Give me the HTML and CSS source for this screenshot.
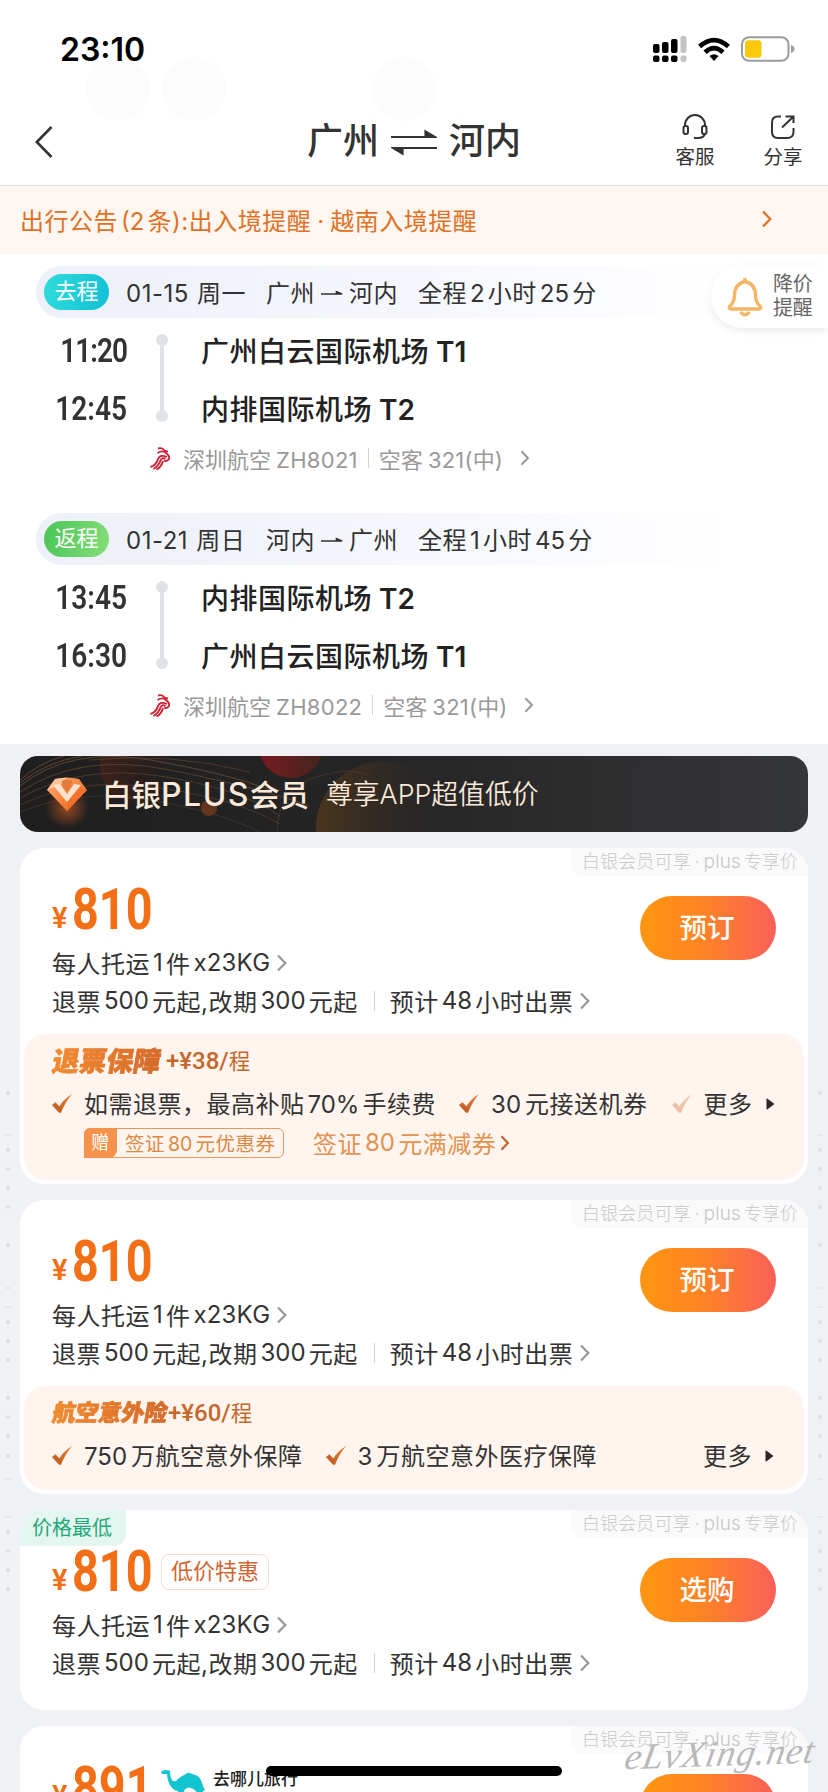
FILE: index.html
```html
<!DOCTYPE html>
<html lang="zh-CN">
<head>
<meta charset="utf-8">
<title>广州 ⇌ 河内</title>
<link rel="stylesheet" href="styles.css">
</head>
<body>
<svg class="defs" width="0" height="0">
  <defs>
    <linearGradient id="tickFill" x1="0" y1="1" x2="1" y2="0"><stop offset="0" stop-color="#b9561e"/><stop offset="1" stop-color="#e8893f"/></linearGradient>
    <symbol id="chev" viewBox="0 0 10 18"><path d="M1 1.500 L8.300 9 L1 16.500" fill="none" stroke="currentColor" stroke-width="2.300"/></symbol>
    <symbol id="tick" viewBox="0 0 20 19"><path d="M0 11 L3.400 8.300 L7.400 12.200 Q12 5 20 0 Q13 8.500 9 18.800 L7 18.800 Z" fill="url(#tickFill)"/></symbol>
    <symbol id="more" viewBox="0 0 8 12"><path d="M.5 1.200 Q.5 0 1.500 .700 L7.600 5.300 Q8.300 6 7.600 6.700 L1.500 11.300 Q.5 12 .5 10.800 Z" fill="#2c2624"/></symbol>
    <symbol id="to" viewBox="0 0 24 10"><path d="M0 6 H22 L16 3.500 V6" fill="#333" stroke="#333" stroke-width="1.400"/></symbol>
    <symbol id="szair" viewBox="0 0 20 23"><g fill="none" stroke="#cc2336" stroke-width="1.900"><path d="M8 1.500 Q12 .5 13.500 2.500 Q15 4.500 18 4.500"/><path d="M7.500 6 Q13 2.500 16.500 6.500 Q20 9 19 12 Q17 15 14 13.500"/><path d="M0.500 20 Q6.500 18 8 12 Q10 7 17 10"/><path d="M3.500 22 Q9 18.500 10.500 13.500 Q12 10 15.500 12"/><path d="M6.500 22.500 Q11.500 20 13 14"/></g></symbol>
    <symbol id="trackL" viewBox="0 0 12 504"><g fill="#dcdee2"><circle cx="6" cy="5" r="2"/><path d="M3 46.500h6v1H3z"/><circle cx="6" cy="62" r="2"/><circle cx="6" cy="81" r="2"/><circle cx="6" cy="100" r="2"/><circle cx="6" cy="119" r="2"/><circle cx="6" cy="157" r="2"/><path d="M3 199.500h6v1H3zM3 218.500h6v1H3z"/><circle cx="6" cy="234" r="2"/><circle cx="6" cy="253" r="2"/><circle cx="6" cy="272" r="2"/><circle cx="6" cy="310" r="2"/><circle cx="6" cy="329" r="2"/><circle cx="6" cy="348" r="2"/><circle cx="6" cy="368" r="2"/><path d="M3 390.500h6v1H3zM3 428.500h6v1H3z"/><circle cx="6" cy="444" r="2"/><circle cx="6" cy="463" r="2"/><circle cx="6" cy="482" r="2"/><circle cx="6" cy="501" r="2"/></g></symbol>
  </defs>
</svg>

<div class="screen">
  <header class="top">
    <span class="ghost g1"></span><span class="ghost g2"></span><span class="ghost g3"></span>
    <div class="status">
      <span class="clock">23:10</span>
      <div class="status-icons">
        <svg class="ic-signal" viewBox="0 0 34 26"><g><rect x="0" y="8" width="6.500" height="9" rx="2"/><rect x="9" y="6" width="6.500" height="11" rx="2"/><rect x="18" y="3" width="6.500" height="14" rx="2"/><rect x="0" y="19.500" width="6.500" height="6.500" rx="2"/><rect x="9" y="19.500" width="6.500" height="6.500" rx="2"/><rect x="18" y="19.500" width="6.500" height="6.500" rx="2"/></g><g fill="#c4c4c4"><rect x="27.500" y="0" width="6" height="17" rx="2"/><rect x="27.500" y="19.500" width="6" height="6.500" rx="2"/></g></svg>
        <svg class="ic-wifi" viewBox="0 0 32 24"><g fill="none" stroke="#000" stroke-width="4.600"><path d="M1.600 9 Q16 -3.800 30.400 9"/><path d="M7 14.700 Q16 6.500 25 14.700"/></g><path d="M11.500 18.600 Q16 15 20.500 18.600 L16 23.500 Z"/></svg>
        <svg class="ic-battery" viewBox="0 0 54 26"><rect x="1" y="1.200" width="46.500" height="23.600" rx="7" fill="#fff" stroke="#9c9c9c" stroke-width="2"/><rect x="4" y="4.200" width="16.500" height="17.600" rx="3.500" fill="#fbc90b"/><path d="M50 9 Q53.500 10.500 53.500 13 Q53.500 15.500 50 17 Z" fill="#9c9c9c"/></svg>
      </div>
    </div>
    <nav class="nav">
      <svg class="ic-back" viewBox="0 0 18 32"><path d="M16.500 1 L1.800 16 L16.500 31" fill="none" stroke="#333" stroke-width="2.600"/></svg>
      <h1 class="title"><span>广州</span><svg class="ic-swap" viewBox="0 0 46 28"><path d="M0 9 H44 L34.500 3.500 V9" fill="#333" stroke="#333" stroke-width="2.200"/><path d="M46 20 H2 L11.500 25.500 V20" fill="#333" stroke="#333" stroke-width="2.200"/></svg><span>河内</span></h1>
      <div class="tools">
        <div class="tool"><svg viewBox="0 0 26 26"><g fill="none" stroke="#333" stroke-width="2"><path d="M3 13 V11 A10 10 0 0 1 23 11 V13"/><rect x="1.500" y="12" width="4.500" height="8" rx="2"/><rect x="20" y="12" width="4.500" height="8" rx="2"/><path d="M23 19.500 Q22 24 16 24 H12"/></g></svg><span>客服</span></div>
        <div class="tool"><svg viewBox="0 0 26 26"><g fill="none" stroke="#333" stroke-width="2"><path d="M11 2.500 H8 Q2 2.500 2 8.500 V18 Q2 24 8 24 H17 Q23.500 24 23.500 18 V14"/><path d="M12 13.500 L23 3 M15.500 2.500 H23.500 V9"/></g></svg><span>分享</span></div>
      </div>
    </nav>
  </header>

  <div class="notice"><span class="notice-text">出行公告<span class="n">(2</span>条):出入境提醒<span class="dot">·</span>越南入境提醒</span><svg class="chev"><use href="#chev"/></svg></div>

  <section class="flights">
    <div class="alert"><svg viewBox="0 0 36 40"><g fill="none" stroke="#f5b765" stroke-width="3.400"><path d="M18 4.500 Q28.500 7 28.500 18 Q28.500 25 33 29 Q35 31.500 32 32 H4 Q1 31.500 3 29 Q7.500 25 7.500 18 Q7.500 7 18 4.500 Z" stroke-linejoin="round"/><path d="M13.500 35 Q18 40.500 22.500 35" /><path d="M18 1 V4"/></g></svg><span>降价<br>提醒</span></div>

    <article class="leg">
      <div class="leg-head"><span class="badge go">去程</span><span class="date">01-15 <span class="day">周一</span></span><span class="route">广州<svg><use href="#to"/></svg>河内</span><span class="dur">全程<span class="n">2</span>小时<span class="n">25</span>分</span></div>
      <div class="leg-body">
        <div class="times"><span class="narrow">11:20</span><span>12:45</span></div>
        <div class="line"></div>
        <div class="ports"><span>广州白云国际机场 <b>T1</b></span><span>内排国际机场 <b>T2</b></span></div>
      </div>
      <div class="carrier"><svg class="logo"><use href="#szair"/></svg><span>深圳航空<span class="fn">ZH8021</span></span><i class="bar"></i><span>空客<span class="ac">321(</span>中)</span><svg class="chev"><use href="#chev"/></svg></div>
    </article>

    <article class="leg">
      <div class="leg-head"><span class="badge back">返程</span><span class="date">01-21 <span class="day">周日</span></span><span class="route">河内<svg><use href="#to"/></svg>广州</span><span class="dur">全程<span class="n">1</span>小时<span class="n">45</span>分</span></div>
      <div class="leg-body">
        <div class="times"><span>13:45</span><span>16:30</span></div>
        <div class="line"></div>
        <div class="ports"><span>内排国际机场 <b>T2</b></span><span>广州白云国际机场 <b>T1</b></span></div>
      </div>
      <div class="carrier"><svg class="logo"><use href="#szair"/></svg><span>深圳航空<span class="fn">ZH8022</span></span><i class="bar"></i><span>空客<span class="ac">321(</span>中)</span><svg class="chev"><use href="#chev"/></svg></div>
    </article>
  </section>

  <main class="offers">
    <svg class="track left"><use href="#trackL"/></svg>
    <svg class="track right"><use href="#trackL"/></svg>

    <div class="plus">
      <svg class="plus-art" viewBox="0 0 788 76">
        <defs>
          <linearGradient id="amber" x1="0" x2="1"><stop offset="0" stop-color="#4a351c"/><stop offset="1" stop-color="#2a2725" stop-opacity="0"/></linearGradient>
          <linearGradient id="rust" x1="0" x2="1"><stop offset="0" stop-color="#3d2119"/><stop offset="1" stop-color="#2a1d19" stop-opacity="0"/></linearGradient>
          <linearGradient id="ruby" x1="0" x2="1"><stop offset="0" stop-color="#771c20"/><stop offset="1" stop-color="#42241c"/></linearGradient>
          <linearGradient id="gem" x1="0" y1="0" x2="1" y2="1"><stop offset="0" stop-color="#ffb27c"/><stop offset=".5" stop-color="#f8863f"/><stop offset="1" stop-color="#e45b1d"/></linearGradient>
          <radialGradient id="glow"><stop offset="0" stop-color="#b25420" stop-opacity=".8"/><stop offset="1" stop-color="#b25420" stop-opacity="0"/></radialGradient>
        </defs>
        <circle cx="118" cy="10" r="38" fill="url(#rust)"/>
        <circle cx="271" cy="-10" r="32" fill="url(#ruby)"/>
        <circle cx="362" cy="72" r="66" fill="url(#amber)"/>
        <circle cx="189" cy="52" r="8" fill="#62351c"/>
        <g fill="none" stroke="#5e4630" stroke-width="1">
          <path d="M0 24 Q20 6 44 0"/><path d="M0 27 Q26 6 62 0"/><path d="M0 30 Q50 -10 130 4 T250 34"/><path d="M0 36 Q60 -4 150 14 T290 50" opacity=".8"/><path d="M0 42 Q60 8 140 20 T260 60" opacity=".7"/><path d="M0 49 Q60 20 140 32 T260 68" opacity=".6"/><path d="M0 56 Q60 32 130 44 T240 76" opacity=".5"/><path d="M70 4 Q150 -4 230 16" opacity=".7"/><path d="M257 76 Q258 30 300 20 Q330 10 350 20" opacity=".5"/>
        </g>
        <ellipse cx="47" cy="52" rx="22" ry="20" fill="url(#glow)"/>
        <path d="M35 23 Q47 20 59 23 L67 34 L47 55 L27 34 Z" fill="url(#gem)"/>
        <path d="M35 23 L47 21.500 L40 29 L27 34 Z" fill="#ffd2ae" opacity=".7"/>
        <path d="M67 34 L47 55 V46 L60 31 Z" fill="#f0702c" opacity=".75"/>
        <path d="M42 25 Q47 22 52 25 L51 31 L47 36 L43 31 Z" fill="#e47a3c"/>
        <path d="M33 29 L40 28 L47 38 L54 28 L61 29 L47 46 Z" fill="#ffe3cb"/>
      </svg>
      <strong class="plus-name">白银<span>PLUS</span>会员</strong><span class="plus-desc">尊享<span>APP</span>超值低价</span>
    </div>

    <article class="card">
      <span class="perk">白银会员可享<span class="dot">·</span><span class="en">plus</span>专享价</span>
      <div class="card-body">
        <div class="info">
          <div class="price"><small>¥</small><b>810</b></div>
          <div class="row">每人托运<span class="n">1</span>件<span class="n kg">x23KG</span><svg class="chev"><use href="#chev"/></svg></div>
          <div class="row">退票<span class="n">500</span>元起,改期<span class="n">300</span>元起<i class="bar"></i>预计<span class="n">48</span>小时出票<svg class="chev"><use href="#chev"/></svg></div>
        </div>
        <button class="buy">预订</button>
      </div>
      <div class="promo">
        <div class="promo-title"><em class="w4">退票保障</em><span class="add">+¥38/<span>程</span></span></div>
        <div class="benefits"><svg class="tick"><use href="#tick"/></svg><span>如需退票，最高补贴<span class="n">70%</span>手续费</span><svg class="tick gap1"><use href="#tick"/></svg><span><span class="n first">30</span>元接送机券</span><svg class="tick faded"><use href="#tick"/></svg><span class="more">更多<svg><use href="#more"/></svg></span></div>
        <div class="coupons"><span class="coupon"><i>赠</i><span>签证<span class="n">80</span>元优惠券</span></span><span class="visa">签证<span class="n">80</span>元满减券<svg class="chev"><use href="#chev"/></svg></span></div>
      </div>
    </article>

    <article class="card">
      <span class="perk">白银会员可享<span class="dot">·</span><span class="en">plus</span>专享价</span>
      <div class="card-body">
        <div class="info">
          <div class="price"><small>¥</small><b>810</b></div>
          <div class="row">每人托运<span class="n">1</span>件<span class="n kg">x23KG</span><svg class="chev"><use href="#chev"/></svg></div>
          <div class="row">退票<span class="n">500</span>元起,改期<span class="n">300</span>元起<i class="bar"></i>预计<span class="n">48</span>小时出票<svg class="chev"><use href="#chev"/></svg></div>
        </div>
        <button class="buy">预订</button>
      </div>
      <div class="promo short">
        <div class="promo-title"><em class="w5">航空意外险</em><span class="add">+¥60/<span>程</span></span></div>
        <div class="benefits"><svg class="tick"><use href="#tick"/></svg><span><span class="n first">750</span>万航空意外保障</span><svg class="tick gap1"><use href="#tick"/></svg><span><span class="n first">3</span>万航空意外医疗保障</span><span class="more">更多<svg><use href="#more"/></svg></span></div>
      </div>
    </article>

    <article class="card plain">
      <span class="lowest">价格最低</span>
      <span class="perk">白银会员可享<span class="dot">·</span><span class="en">plus</span>专享价</span>
      <div class="card-body">
        <div class="info">
          <div class="price"><small>¥</small><b>810</b><span class="deal">低价特惠</span></div>
          <div class="row">每人托运<span class="n">1</span>件<span class="n kg">x23KG</span><svg class="chev"><use href="#chev"/></svg></div>
          <div class="row">退票<span class="n">500</span>元起,改期<span class="n">300</span>元起<i class="bar"></i>预计<span class="n">48</span>小时出票<svg class="chev"><use href="#chev"/></svg></div>
        </div>
        <button class="buy">选购</button>
      </div>
    </article>

    <article class="card">
      <span class="perk">白银会员可享<span class="dot">·</span><span class="en">plus</span>专享价</span>
      <div class="card-body">
        <div class="info">
          <div class="price"><small>¥</small><b>891</b><span class="brand"><svg viewBox="0 0 44 36"><path d="M0 1.500 L4 0 L9 .5 Q9 7 11 10 Q14 13 17 9 Q20 6 24 4.500 Q27 1.500 30 3.500 L34 5 Q39 6 41 13 Q42 17 44 20 L42 21 L41.500 36 H36 L35 21 Q32 18 28 17.500 Q24 18 23 21 L22 36 H18 L17 21 Q11 20 8 13 Q6 8 6 4 L1 4 Z" fill="#12c3d0"/></svg>去哪儿旅行</span></div>
        </div>
        <button class="buy" aria-label="选购"></button>
      </div>
    </article>
  </main>

  <div class="home-bar"></div>
  <div class="watermark">eLvXing.net</div>
</div>
</body>
</html>
```
FILE: styles.css
```css
* { box-sizing: border-box; }
body { margin: 0; background: #eff1f5; font-family: Inter, "Noto Sans CJK SC", sans-serif; color: #333; font-size: 24px; letter-spacing: .5px; }
svg { display: block; flex: none; }
.defs { position: absolute; }
.screen { position: relative; width: 828px; height: 1792px; overflow: hidden; white-space: nowrap; }
.n { margin: 0 3.200px 0 3px; letter-spacing: 0; }
.n.first { margin-left: 0; margin-right: 4px; }
.dot { display: inline-block; width: 19px; text-align: center; letter-spacing: 0; }
.chev { width: 10px; height: 18px; color: #999; }

/* header */
.top { position: relative; height: 186px; background: #fff; border-bottom: 1px solid #dcdcdc; }
.ghost { position: absolute; top: 57px; width: 64px; height: 64px; border-radius: 50%; background: #fcfcfc; }
.g1 { left: 86px; } .g2 { left: 162px; } .g3 { left: 372px; }
.status { position: relative; height: 98px; padding: 0 34px 0 60px; display: flex; align-items: center; justify-content: space-between; }
.clock { font-weight: 600; font-size: 32px; color: #000; letter-spacing: 0; }
.status-icons { display: flex; align-items: center; gap: 11px; margin-right: -1px; }
.ic-signal { width: 34px; height: 26px; }
.ic-wifi { width: 32px; height: 25px; }
.ic-battery { width: 54px; height: 26px; }
.nav { position: relative; height: 87px; display: grid; grid-template-columns: 200px 1fr 200px; align-items: center; }
.ic-back { width: 18px; height: 32px; margin-left: 35px; }
.title { margin: 0; display: flex; align-items: center; justify-content: center; gap: 12px; font-size: 36px; font-weight: 500; letter-spacing: 0; }
.title span { padding-bottom: 7px; }
.ic-swap { width: 46px; height: 28px; }
.tools { display: flex; justify-content: flex-end; gap: 48px; padding-right: 25px; }
.tool { width: 40px; display: flex; flex-direction: column; align-items: center; gap: 5px; font-size: 19.5px; line-height: 24px; letter-spacing: 0; }
.tool svg { width: 26px; height: 26px; }

.notice { height: 68px; padding: 0 56px 2px 20px; background: #fef6f0; color: #de7226; display: flex; align-items: center; justify-content: space-between; font-size: 24px; }
.notice .chev { color: #de7226; }

/* itinerary */
.flights { position: relative; height: 490px; padding: 12px 0 0 36px; background: #fff; display: flex; flex-direction: column; }
.alert { position: absolute; right: 0; top: 11px; width: 117px; height: 63px; padding-left: 16px; border-radius: 32px 0 0 32px; background: #fff; box-shadow: 0 3px 8px rgba(0,0,0,.08); display: flex; align-items: center; gap: 10px; font-size: 20px; line-height: 24px; color: #666; letter-spacing: -.3px; }
.alert svg { width: 36px; height: 40px; }
.alert span { padding-bottom: 1px; }
.leg { flex: none; height: 247px; }
.leg-head { height: 52px; width: 700px; padding: 0 0 2px 8px; border-radius: 26px 0 0 26px; background: linear-gradient(90deg, #eef0f9, #f6f8fd 60%, #fff); display: flex; align-items: center; font-size: 24px; }
.badge { width: 65px; height: 36px; border-radius: 18px; color: #fff; font-size: 22px; line-height: 34px; text-align: center; letter-spacing: 0; margin: 2px 17px 0 0; }
.go { background: linear-gradient(100deg, #31dcdc, #10c0d6); }
.back { background: linear-gradient(100deg, #4bc556, #85de79); }
.date { width: 140px; } .day { margin-left: 1px; }
.route { display: flex; align-items: center; gap: 5.500px; width: 152px; }
.route svg { width: 23px; height: 10px; margin-top: 3px; }
.leg-body { height: 119px; display: grid; grid-template-columns: 91px 12px 1fr; column-gap: 29px; padding-top: 3px; }
.times, .ports { display: flex; flex-direction: column; }
.times span, .ports span { height: 58px; line-height: 58px; }
.times { align-items: flex-end; }
.times span { font-family: Roboto, sans-serif; font-weight: 600; font-size: 34px; letter-spacing: 0; transform: scaleX(.825); transform-origin: right; }
.times .narrow { letter-spacing: -1.2px; }
.line { margin: 13px 4px 0; height: 88px; width: 4px; position: relative; background: linear-gradient(#e0e3e5, #e0e3e5) 0 50% / 4px 76px no-repeat; }
.line::before, .line::after { content: ""; position: absolute; left: -4px; width: 12px; height: 12px; border-radius: 50%; background: #e0e3e5; }
.line::before { top: 0; } .line::after { bottom: 0; }
.ports { padding: 2px 0 0 4px; color: #222; font-weight: 500; font-size: 28px; }
.ports b { font-weight: 600; margin-left: -1px; letter-spacing: 0; }
.carrier { height: 42px; padding-left: 114px; display: flex; align-items: center; color: #999; font-size: 22px; letter-spacing: 0; }
.carrier > span { padding-bottom: 1px; }
.logo { width: 20px; height: 23px; margin-right: 13px; }
.carrier .bar { height: 20px; margin: 0 10px; }
.fn { margin-left: 5px; letter-spacing: .3px; }
.ac { margin-left: 5px; letter-spacing: .2px; }
.carrier .chev { margin-left: 17px; height: 16px; }
.bar { width: 1px; height: 20px; background: #d4d4d4; }

/* offers */
.offers { position: relative; padding: 12px 20px 0; display: flex; flex-direction: column; gap: 16px; }
.track { position: absolute; top: 344px; width: 12px; height: 504px; }
.track.left { left: 2px; } .track.right { right: 2px; }
.plus { position: relative; height: 76px; border-radius: 18px; overflow: hidden; background: linear-gradient(90deg, #1f1e1f, #272728 55%, #353638); padding: 0 0 3px 82px; display: flex; align-items: center; color: #fbe9d9; }
.plus-art { position: absolute; inset: 0; width: 788px; height: 76px; }
.plus-name { position: relative; font-weight: 500; font-size: 29.500px; letter-spacing: 0; }
.plus-name span { letter-spacing: 1.500px; font-size: 32px; }
.plus-desc { position: relative; margin-left: 17px; font-size: 26.800px; font-weight: 350; letter-spacing: 0; }

.card { position: relative; border-radius: 24px; overflow: hidden; background: #fff; flex: none; padding-bottom: 4px; }
.plain { padding-bottom: 28px; }
.perk { position: absolute; right: 0; top: 0; width: 237px; height: 28px; padding-left: 11px; border-bottom-left-radius: 12px; background: #fafafa; color: #c8c8c8; font-size: 18px; line-height: 27px; font-weight: 300; letter-spacing: .1px; }
.perk .dot { width: 13px; }
.en { margin-right: 3px; font-size: 19px; }
.card-body { display: flex; justify-content: space-between; padding: 0 32px; height: 172px; }
.price { height: 96px; padding-top: 41px; display: flex; align-items: flex-start; font-family: Roboto, "Noto Sans CJK SC", sans-serif; color: #f26f16; line-height: 41px; letter-spacing: 0; }
.price small { font-size: 29px; font-weight: 600; width: 20px; padding-top: 9px; }
.price b { font-size: 57px; font-weight: 700; width: 77px; transform: scaleX(.82); transform-origin: left; }
.row { height: 38px; padding-bottom: 2px; display: flex; align-items: center; color: #333; }
.row .bar { margin: 2px 15px 0 16px; }
.row .chev { margin: 2px 0 0 7px; }
.kg { margin-right: 0; letter-spacing: .2px; }
.buy { flex: none; width: 136px; height: 64px; margin-top: 48px; padding: 0 2px 0 0; border: 0; border-radius: 32px; background: linear-gradient(90deg, #ff9610, #fe8423 45%, #f9605a); color: #fff; font: 500 27.500px/62px Inter, "Noto Sans CJK SC", sans-serif; }
.promo { margin: 14px 4px 0; height: 146px; padding: 5px 28px 0 29px; border-radius: 22px; background: #fff5ee; }
.promo.short { height: 104px; }
.promo-title { height: 42px; padding-bottom: 2px; display: flex; align-items: center; letter-spacing: 0; }
.promo-title em { font-style: normal; font-weight: 900; transform: skewX(-10deg); background: linear-gradient(90deg, #f28a30, #d4692a); -webkit-background-clip: text; background-clip: text; color: transparent; -webkit-text-stroke: .8px transparent; }
.w4 { font-size: 27px; width: 113px; } .w5 { font-size: 23px; width: 115px; }
.add { font: 500 24px Roboto, "Noto Sans CJK SC", sans-serif; color: #c4682c; }
.add span { font-weight: 400; font-size: 21.500px; }
.benefits { height: 46px; padding-bottom: 3px; display: flex; align-items: center; }
.tick { width: 20px; height: 19px; margin: 2px 12px 0 -1px; }
.gap1 { margin-left: 23px; }
.faded { margin-left: 24px; opacity: .35; }
.more { margin-left: auto; display: flex; align-items: center; gap: 13px; padding-right: 3px; }
.more svg { width: 8px; height: 12px; margin-top: 2px; }
.coupons { display: flex; align-items: center; padding-left: 31px; height: 32px; gap: 29px; color: #e29251; }
.coupon { height: 30px; width: 200px; border: 1px solid #e09a5e; border-radius: 6px; display: flex; align-items: center; font-size: 19.500px; letter-spacing: .5px; color: #dd8845; }
.coupon > span { padding-bottom: 2px; }
.coupon i { align-self: stretch; width: 33px; margin: -1px 8px -1px -1px; border-radius: 6px 0 8px 0; background: #f5934c; color: #fff; font-style: normal; font-size: 18px; line-height: 29px; text-align: center; }
.visa { display: flex; align-items: center; padding-bottom: 2px; }
.visa .chev { margin: 1px 0 0 4px; height: 16px; color: #c4602a; }
.lowest { position: absolute; left: 0; top: 0; width: 106px; height: 36px; padding-right: 2px; border-bottom-right-radius: 12px; background: #e3f6ef; color: #25a878; font-size: 20px; line-height: 36px; text-align: center; letter-spacing: 0; }
.deal { margin: 3px 0 0 12px; width: 108px; height: 36px; border: 1px solid #f7dccb; border-radius: 8px; font-size: 22px; line-height: 33px; text-align: center; color: #d0652f; }
.brand { display: flex; align-items: flex-start; gap: 8px; margin: 3px 0 0 12px; color: #222; font-size: 17px; font-weight: 500; line-height: 18px; }
.brand svg { width: 44px; height: 36px; }

/* overlays */
.home-bar { position: absolute; left: 266px; top: 1766px; width: 296px; height: 10px; border-radius: 5px; background: #000; }
.watermark { position: absolute; left: 626px; top: 1732px; font: italic 37px "Liberation Serif", serif; letter-spacing: 1px; color: #b9b9b9; transform: skewX(-12deg) rotate(-2deg); }
```
